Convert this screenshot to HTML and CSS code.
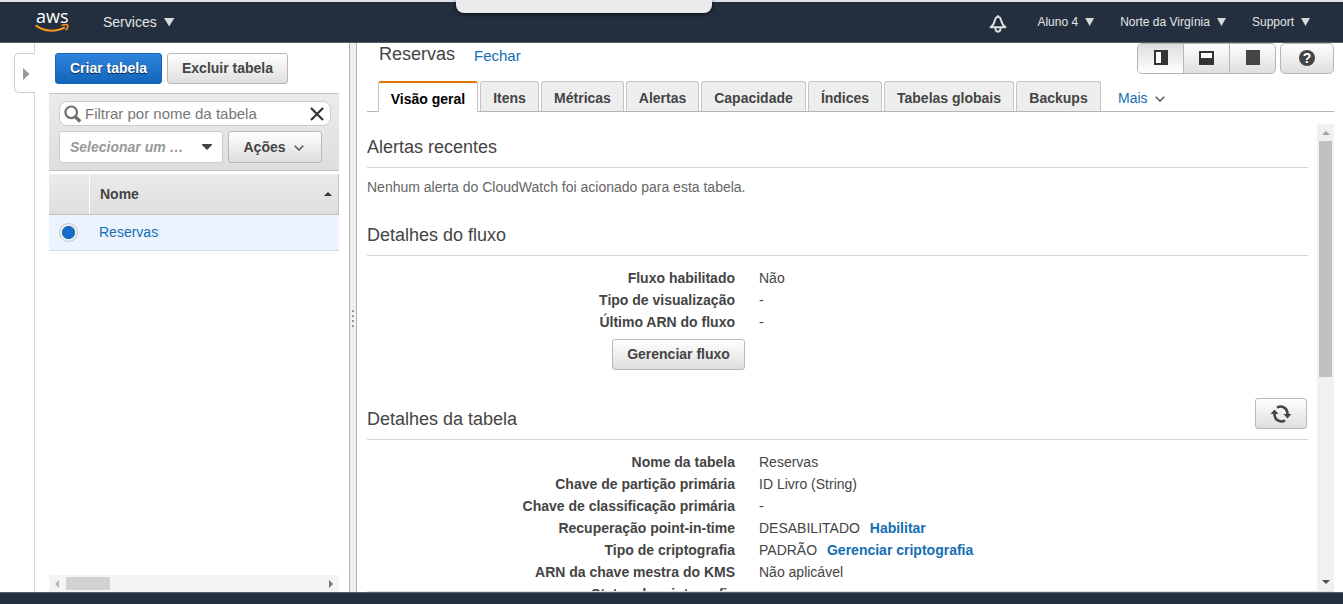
FILE: index.html
```
<!DOCTYPE html>
<html lang="pt-BR">
<head>
<meta charset="utf-8">
<title>DynamoDB</title>
<link rel="stylesheet" href="styles.css">
</head>
<body>
<div class="page">
  <header class="nav">
    <div class="logo">
      <span class="logo-text">aws</span>
      <svg class="logo-smile" width="34" height="9" viewBox="0 0 34 9"><path d="M0.7 1.400C9 7.800 21 8.200 30 3.400" fill="none" stroke="#f7981d" stroke-width="2"/><path d="M26.500 1.400C29 .5 32.500 .5 32.700 1.200C33 2.700 32 5 30.600 6.200" fill="none" stroke="#f7981d" stroke-width="1.500"/></svg>
    </div>
    <div class="nav-item services">Services <i class="tri tri-lg"></i></div>
    <div class="nav-right">
      <svg class="bell" width="18" height="19" viewBox="0 0 18 19" fill="none" stroke="#dfe1e1" stroke-width="1.900" stroke-linejoin="round"><path d="M9 1.900C7 1.900 6.300 3.200 5.800 5.500C5.200 8.500 4.500 10.200 1.500 12.200H16.500C13.500 10.200 12.800 8.500 12.200 5.500C11.700 3.200 11 1.900 9 1.900Z"/><path d="M9 .3V2"/><path d="M6.400 13C6.400 17.900 11.600 17.900 11.600 13"/></svg>
      <div class="nav-item account">Aluno 4 <i class="tri"></i></div>
      <div class="nav-item region">Norte da Virgínia <i class="tri"></i></div>
      <div class="nav-item support">Support <i class="tri"></i></div>
    </div>
    <div class="notch"></div>
  </header>

  <main class="workspace">
    <aside class="rail"><div class="rail-tab"><svg width="7" height="12" viewBox="0 0 7 12"><path d="M0 0L6.500 6L0 12Z" fill="#999"/></svg></div></aside>

    <section class="tables">
      <div class="actions">
        <button class="btn primary create">Criar tabela</button>
        <button class="btn delete">Excluir tabela</button>
      </div>
      <div class="filters">
        <div class="search">
          <svg width="18" height="18" viewBox="0 0 18 18" fill="none" stroke="#707070"><circle cx="7.200" cy="7.300" r="5.800" stroke-width="2.200"/><path d="M11 11.500L16.200 16.500" stroke-width="3.400"/></svg>
          <span>Filtrar por nome da tabela</span>
          <svg width="14" height="14" viewBox="0 0 14 14" stroke="#333" stroke-width="2.200"><path d="M1 1L13 13M13 1L1 13"/></svg>
        </div>
        <div class="filter-row">
          <div class="select"><span>Selecionar um …</span><svg width="10" height="6" viewBox="0 0 10 6"><path d="M0 0H10V1L5 6L0 1Z" fill="#444"/></svg></div>
          <button class="btn menu">Ações <svg width="10" height="6" viewBox="0 0 10 6" fill="none" stroke="#555" stroke-width="1.500"><path d="M.7.700L5 5L9.300.7"/></svg></button>
        </div>
      </div>
      <div class="grid-head"><div class="cell-check"></div><div class="cell-name"><span>Nome</span><svg width="8" height="4" viewBox="0 0 8 4"><path d="M4 0L8 4H0Z" fill="#333"/></svg></div></div>
      <div class="grid-row"><span class="radio"></span><a class="link">Reservas</a></div>
      <div class="hscroll"><svg width="4" height="8" viewBox="0 0 4 8"><path d="M4 0V8L0 4Z" fill="#b5b5b5"/></svg><span class="hthumb"></span><svg class="harrow" width="4" height="8" viewBox="0 0 4 8"><path d="M0 0V8L4 4Z" fill="#777"/></svg></div>
    </section>

    <div class="splitter"><i></i><i></i><i></i><i></i></div>

    <section class="detail">
      <div class="detail-head">
        <h1>Reservas</h1><a class="link close">Fechar</a>
        <div class="layouts">
          <span class="on"><svg width="14" height="15" viewBox="0 0 14 15"><path d="M0 0H14V15H0Z" fill="#333"/><path d="M2 2H7V13H2Z" fill="#fff"/></svg></span>
          <span><svg width="15" height="15" viewBox="0 0 15 15"><path d="M0 1H15V15H0Z" fill="#333"/><path d="M2 3H13V8H2Z" fill="#fff"/></svg></span>
          <span><svg width="14" height="15" viewBox="0 0 14 15"><path d="M0 0H14V15H0Z" fill="#444"/></svg></span>
        </div>
        <button class="btn help"><span>?</span></button>
      </div>
      <nav class="tabs">
        <div class="tab active t1">Visão geral</div><div class="tab t2">Itens</div><div class="tab t3">Métricas</div><div class="tab t4">Alertas</div><div class="tab t5">Capacidade</div><div class="tab t6">Índices</div><div class="tab t7">Tabelas globais</div><div class="tab t8">Backups</div>
        <div class="more link">Mais <svg width="10" height="6" viewBox="0 0 10 6" fill="none" stroke="#555" stroke-width="1.500"><path d="M.7.700L5 5L9.300.7"/></svg></div>
      </nav>
      <div class="scroll-area">
        <div class="content">
          <h2>Alertas recentes</h2>
          <p class="note">Nenhum alerta do CloudWatch foi acionado para esta tabela.</p>
          <h2>Detalhes do fluxo</h2>
          <dl>
            <dt>Fluxo habilitado</dt><dd>Não</dd>
            <dt>Tipo de visualização</dt><dd>-</dd>
            <dt>Último ARN do fluxo</dt><dd>-</dd>
          </dl>
          <button class="btn stream">Gerenciar fluxo</button>
          <h2 class="with-action">Detalhes da tabela
            <button class="btn refresh"><svg width="22" height="18" viewBox="0 0 22 18"><g fill="none" stroke="#444" stroke-width="2.600"><path d="M7 2.700C12 -.2 17.500 3 17.500 9"/><path d="M15 15.300C10 18.200 4.500 15 4.500 9"/></g><path d="M13.500 9H21.500L17.500 13.500ZM.5 9H8.500L4.500 4.500Z" fill="#444"/></svg></button>
          </h2>
          <dl>
            <dt>Nome da tabela</dt><dd>Reservas</dd>
            <dt>Chave de partição primária</dt><dd>ID Livro (String)</dd>
            <dt>Chave de classificação primária</dt><dd>-</dd>
            <dt>Recuperação point-in-time</dt><dd>DESABILITADO <a class="link strong">Habilitar</a></dd>
            <dt>Tipo de criptografia</dt><dd>PADRÃO <a class="link strong">Gerenciar criptografia</a></dd>
            <dt>ARN da chave mestra do KMS</dt><dd>Não aplicável</dd>
            <dt>Status da criptografia</dt><dd></dd>
          </dl>
        </div>
        <div class="vscroll"><svg width="8" height="4" viewBox="0 0 8 4"><path d="M4 0L8 4H0Z" fill="#a3a3a3"/></svg><span class="vthumb"></span><svg class="varrow" width="8" height="4" viewBox="0 0 8 4"><path d="M0 0H8L4 4Z" fill="#505050"/></svg></div>
      </div>
    </section>
  </main>
  <footer class="footer"></footer>
</div>
</body>
</html>
```
FILE: styles.css
```
* { box-sizing: border-box; }
body { margin: 0; font: 14px/22px "Liberation Sans", Arial, sans-serif; color: #444; background: #fff; }
svg { display: block; flex: none; }
h1, h2, p, dl, dd { margin: 0; }
.page { width: 1343px; height: 604px; display: flex; flex-direction: column; overflow: hidden; }
.link { color: #146eb4; }

.nav { position: relative; height: 43px; flex: none; display: flex; align-items: flex-start; background: #232f3e; border-top: 2px solid #dfe2e6; border-bottom: 1px solid #555d69; padding-left: 35px; color: #e4e6e6; }
.logo { width: 68px; padding-top: 6px; }
.logo-text { display: block; height: 15px; font: 500 18px/17px "Open Sans", sans-serif; color: #fff; padding-left: 1px; }
.logo-smile { margin-top: 1px; }
.nav-item { display: flex; align-items: center; height: 40px; font-size: 12px; white-space: nowrap; }
.services { font-size: 14px; }
.tri { width: 9px; height: 8px; margin-left: 7px; background: #d5dbdb; clip-path: polygon(0 0, 100% 0, 50% 100%); }
.tri-lg { width: 11px; height: 9px; }
.nav-right { display: flex; margin-left: auto; padding-right: 33px; }
.bell { margin: 13px 30px 0 0; }
.account, .region { margin-right: 26px; }
.notch { position: absolute; left: 456px; top: -2px; width: 256px; height: 13px; background: #e9ebed; border-radius: 0 0 8px 8px; box-shadow: 0 1px 4px rgba(0,0,0,.7); clip-path: inset(0 -5px -8px -5px); }

.workspace { height: 549px; flex: none; display: flex; }
.footer { flex: 1; background: #232f3e; border-top: 1px solid #555f68; }
.rail { width: 35px; border-right: 1px solid #d5d5d5; padding: 10px 0 0 14px; }
.rail-tab { width: 21px; height: 40px; border: 1px solid #ccc; border-right: 0; border-radius: 5px 0 0 5px; background: #fff; padding: 14px 0 0 8px; }

.btn { height: 31px; padding: 0 0 1px; display: flex; align-items: center; justify-content: center; border: 1px solid #b8b8b8; border-radius: 3px; background: linear-gradient(#fff, #dedede); color: #444; font: bold 14px "Liberation Sans", Arial, sans-serif; white-space: nowrap; }
.btn.primary { color: #fff; border-color: #1166bb; background: linear-gradient(#3083dc, #1166bb); text-shadow: 0 1px 1px #124; }
.create { width: 107px; }
.delete { width: 121px; }
.tables { width: 314px; padding: 10px 10px 0 14px; display: flex; flex-direction: column; }
.actions { display: flex; gap: 5px; padding-left: 6px; }
.filters { height: 78px; margin-top: 9px; padding: 7px 8px 0 10px; border-top: 1px solid #c4c4c4; border-bottom: 1px solid #c4c4c4; background: linear-gradient(#ebebeb, #dedede); }
.search { height: 25px; display: flex; align-items: center; border: 1px solid #ccc; border-radius: 8px; background: #fff; padding: 0 6px 0 4px; font-size: 15px; color: #777; }
.search span { flex: 1; padding-left: 3px; white-space: nowrap; }
.filter-row { display: flex; gap: 5px; margin-top: 5px; }
.select { width: 164px; height: 32px; display: flex; align-items: center; justify-content: space-between; border: 1px solid #ccc; border-radius: 3px; background: #fff; padding: 0 10px; font-weight: bold; font-style: italic; color: #999; }
.menu { width: 94px; height: 32px; padding: 0 3px 0 0; gap: 8px; }
.menu svg { margin-top: 2px; }
.grid-head { height: 41px; flex: none; margin-top: 3px; display: flex; border-bottom: 1px solid #c4c4c4; border-right: 1px solid #c4c4c4; background: linear-gradient(#ebebeb, #dedede); font-weight: bold; }
.cell-check { width: 41px; border-right: 1px solid #fff; }
.cell-name { flex: 1; display: flex; align-items: center; justify-content: space-between; padding: 0 6px 0 10px; }
.grid-row { height: 36px; flex: none; display: flex; align-items: center; border-bottom: 1px solid #d5dbe2; background: #eaf3fe; padding-left: 10px; }
.grid-row .link { padding-bottom: 2px; }
.radio { width: 19px; height: 19px; margin-right: 21px; border: 1px solid #c8c8c8; border-radius: 50%; background: radial-gradient(circle, #186ec7 0 6.200px, #f0f0f0 6.900px); }
.hscroll { height: 17px; flex: none; margin-top: auto; display: flex; align-items: center; background: #f4f4f4; padding: 0 6px; }
.hthumb { width: 44px; height: 13px; margin-left: 7px; background: #d2d2d2; }
.harrow { margin-left: auto; }

.splitter { width: 8px; border: solid #b5b5b5; border-width: 0 1px; background: #efefef; display: flex; flex-direction: column; align-items: center; gap: 3px; padding-top: 267px; }
.splitter i { width: 2px; height: 2px; background: #999; box-shadow: 1px -1px #fff; }

.detail { width: 986px; padding: 0 9px 0 10px; }
.detail-head { height: 38px; display: flex; align-items: flex-start; padding-left: 12px; }
h1 { font-size: 18px; line-height: 22px; font-weight: normal; width: 95px; }
.close { font-size: 15px; line-height: 26px; }
.layouts { display: flex; width: 139px; height: 31px; margin: 0 4px 0 auto; border: 1px solid #b5b5b5; border-radius: 5px; overflow: hidden; background: linear-gradient(#fff, #dedede); }
.layouts span { width: 46px; flex: none; display: flex; align-items: flex-start; justify-content: center; padding-top: 6px; border-right: 1px solid #b5b5b5; }
.layouts span:last-child { width: 45px; border: 0; }
.layouts .on { padding-left: 1px; background: linear-gradient(#dedede, #fff); }
.help { width: 54px; border-radius: 5px; }
.help span { width: 16px; height: 16px; border-radius: 50%; background: #444; color: #fff; font-size: 14px; line-height: 17px; text-align: center; }
.tabs { height: 31px; display: flex; gap: 2px; padding-left: 11px; border-bottom: 1px solid #b5b5b5; }
.tab { height: 30px; border: 1px solid #c4c4c4; border-bottom: 0; border-radius: 3px 3px 0 0; background: #eee; font-weight: bold; line-height: 32px; text-align: center; white-space: nowrap; }
.tab.active { height: 31px; background: #fff; border-top: 2px solid #e07700; color: #000; }
.t1 { width: 100px; } .t2 { width: 59px; } .t3 { width: 83px; } .t4 { width: 73px; } .t5 { width: 105px; } .t6 { width: 74px; } .t7 { width: 130px; } .t8 { width: 85px; }
.more { display: flex; align-items: center; gap: 7px; padding: 4px 0 0 15px; }
.more svg { margin-top: 2px; }
.scroll-area { height: 468px; margin-top: 12px; display: flex; justify-content: space-between; overflow: hidden; border-bottom: 1px solid #dcdfdf; }
.content { width: 941px; height: 467px; overflow: hidden; }
h2 { height: 44px; padding-top: 12px; border-bottom: 1px solid #d5d5d5; font-size: 18px; line-height: 22px; font-weight: normal; }
.note { padding: 8px 0 14px; color: #666; }
dl { display: grid; grid-template-columns: 368px 1fr; column-gap: 24px; grid-auto-rows: 22px; padding-top: 11px; }
dt { font-weight: bold; text-align: right; }
.strong { font-weight: bold; margin-left: 6px; }
.stream { width: 133px; margin: 6px 0 0 245px; }
.with-action { height: 70px; padding-top: 28px; display: flex; justify-content: space-between; padding-right: 1px; line-height: 42px; }
.refresh { width: 52px; padding: 0; }
.vscroll { width: 17px; display: flex; flex-direction: column; align-items: center; background: #f1f1f1; padding: 7px 0; }
.vthumb { width: 13px; height: 236px; margin-top: 6px; background: #c1c1c1; }
.varrow { margin-top: auto; }
```
